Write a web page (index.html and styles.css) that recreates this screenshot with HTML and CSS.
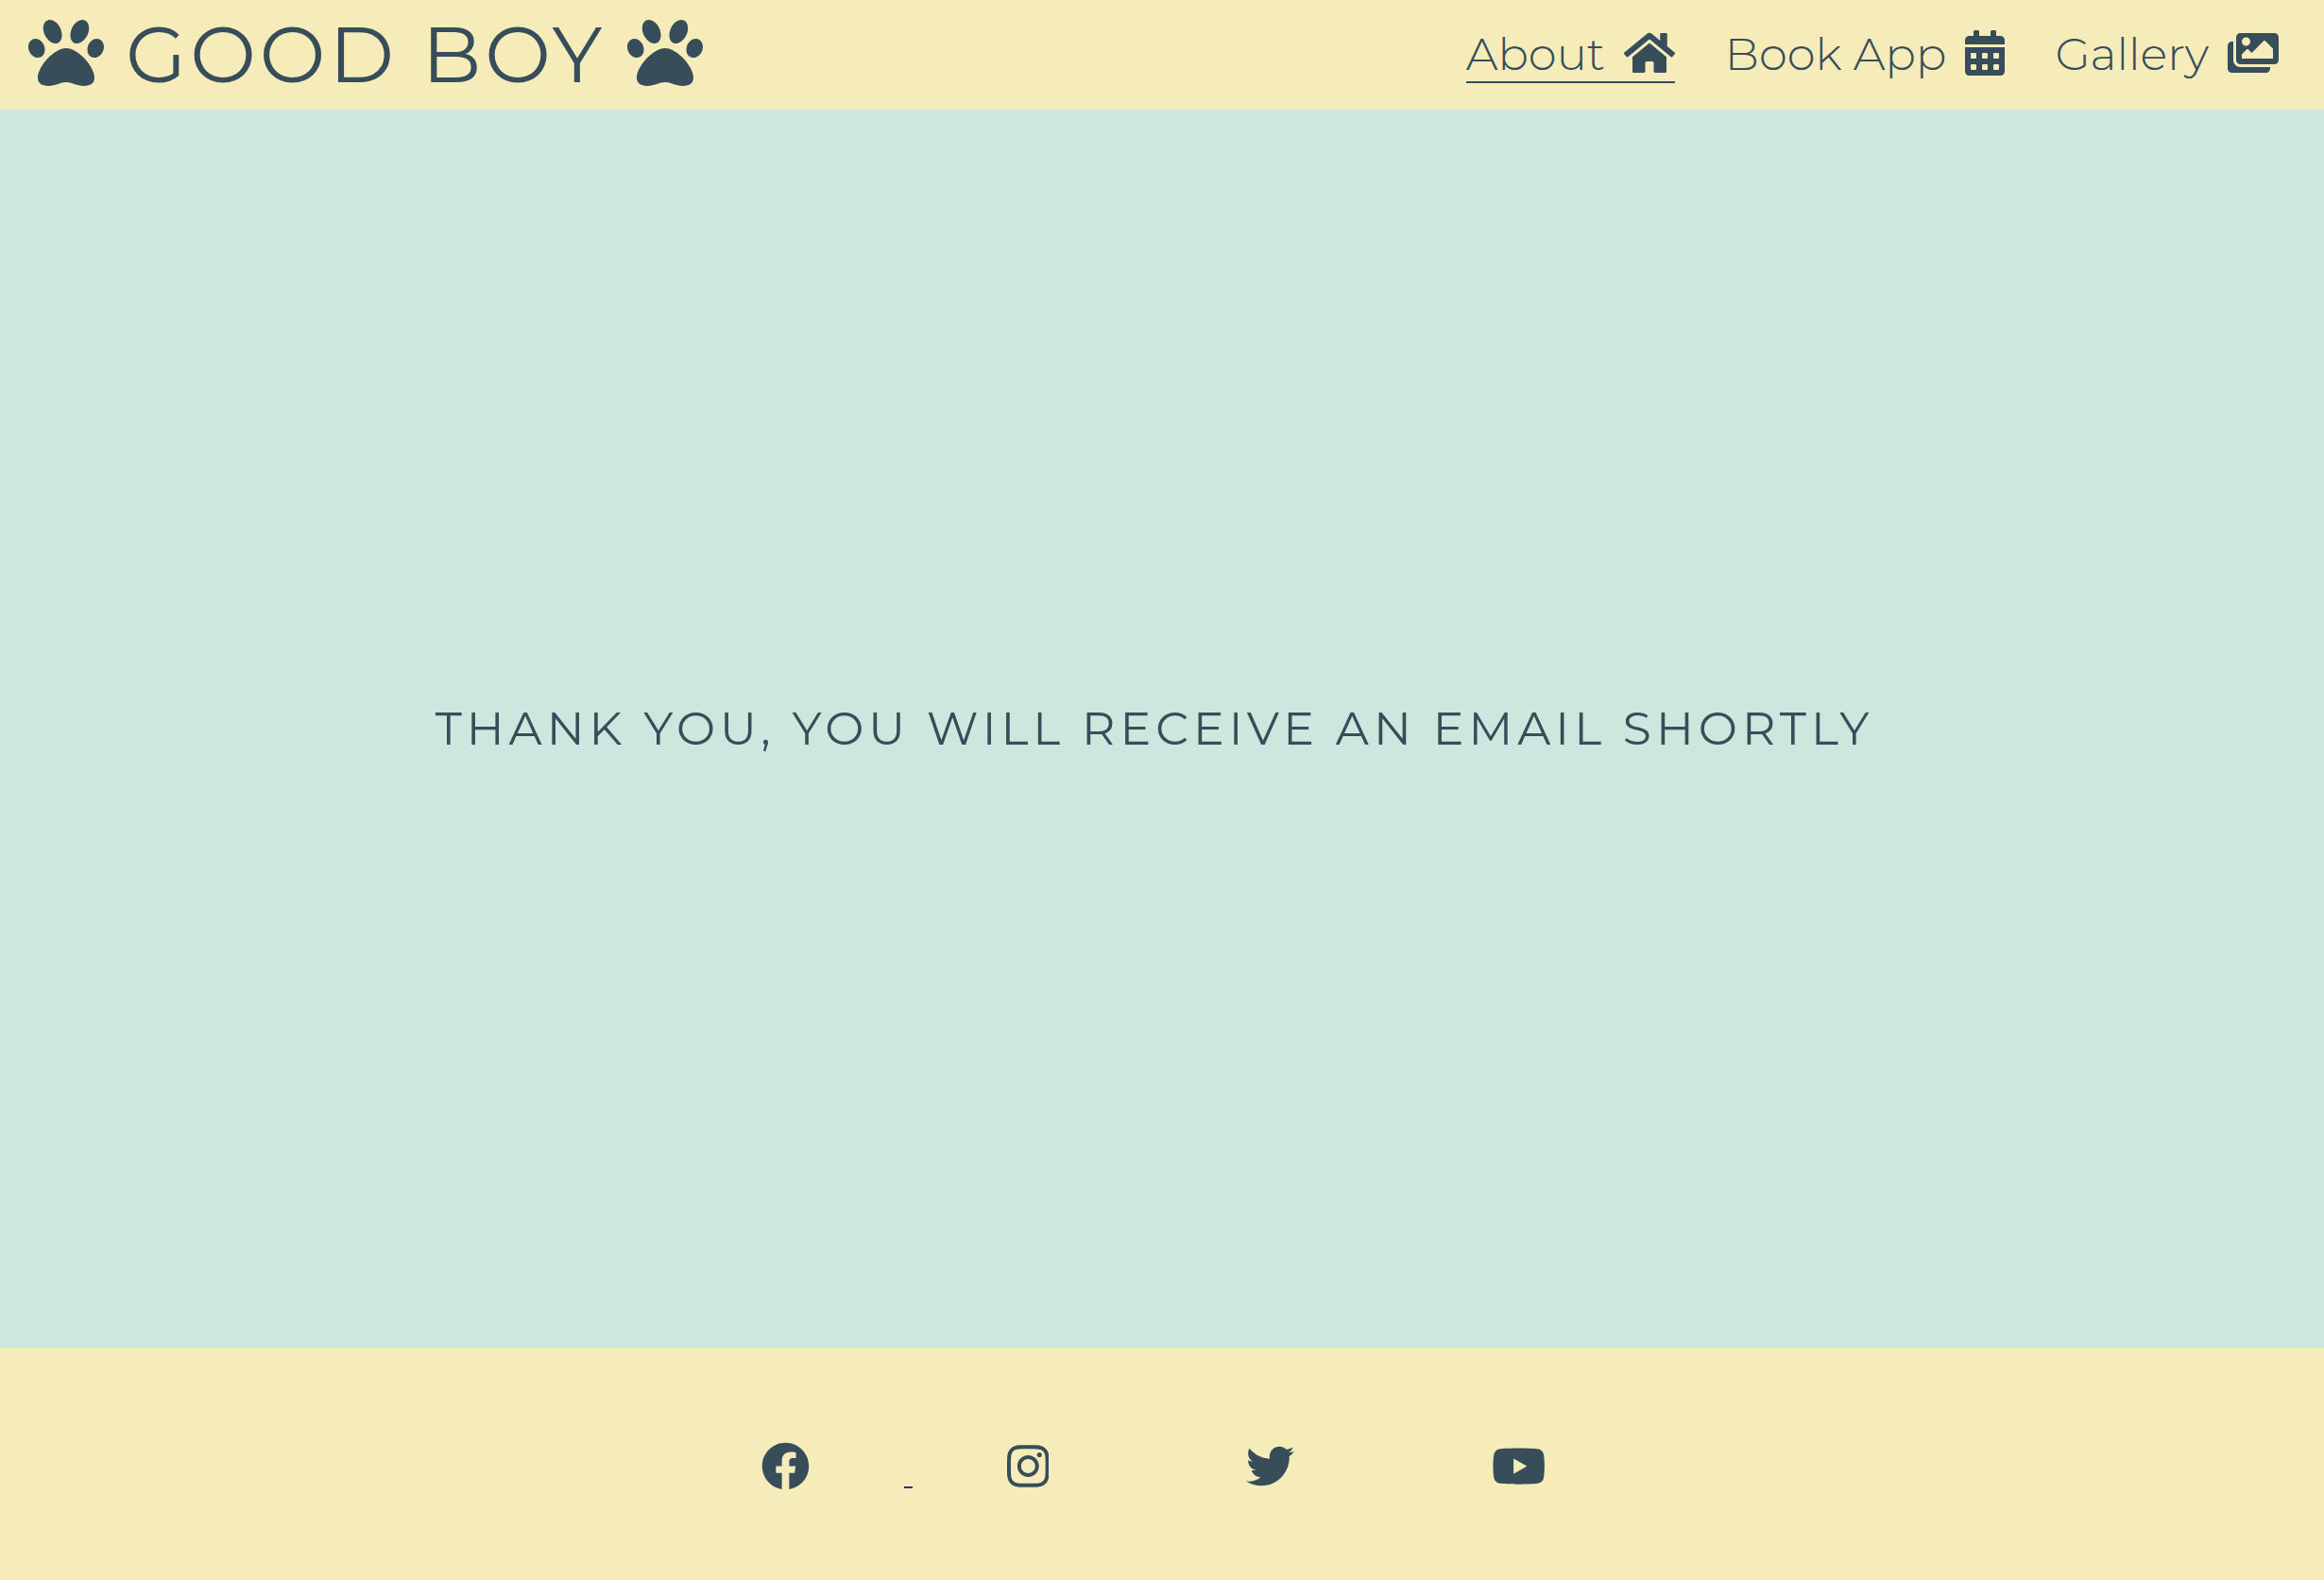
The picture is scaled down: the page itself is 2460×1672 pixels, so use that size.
FILE: index.html
```html
<!DOCTYPE html>
<html lang="en">
<head>
<meta charset="utf-8">
<meta name="viewport" content="width=device-width, initial-scale=1">
<title>Good Boy</title>
<link rel="stylesheet" href="styles.css">
</head>
<body>
<svg class="sprite" aria-hidden="true">
  <symbol id="paw" viewBox="0 0 512 512"><path d="M256 224c-79.41 0-192 122.76-192 200.25 0 34.9 26.81 55.75 71.74 55.75 48.84 0 81.09-25.08 120.26-25.08 39.51 0 71.85 25.08 120.26 25.08 44.93 0 71.74-20.85 71.74-55.75C448 346.76 335.41 224 256 224zm-147.28-12.61c-10.4-34.65-42.44-57.09-71.56-50.13-29.12 6.96-44.29 40.69-33.89 75.34 10.4 34.65 42.44 57.09 71.56 50.13 29.12-6.96 44.29-40.69 33.89-75.34zm84.72-20.78c30.94-8.14 42.94-49.88 26.81-93.25-16.13-43.37-54.28-71.93-85.22-63.79s-42.94 49.9-26.81 93.27 54.28 71.91 85.22 63.77zm281.39-29.34c-29.12-6.96-61.15 15.48-71.56 50.13-10.4 34.65 4.77 68.38 33.89 75.34 29.12 6.96 61.15-15.48 71.56-50.13 10.4-34.65-4.77-68.38-33.89-75.34zm-156.27 29.34c30.94 8.14 69.09-20.42 85.22-63.79 16.13-43.37 4.13-85.11-26.81-93.25s-69.08 20.42-85.21 63.79c-16.13 43.37-4.14 85.11 26.8 93.25z"/></symbol>
</svg>
<header class="header">
  <h1 class="brand">
    <svg class="paw" aria-hidden="true"><use href="#paw"/></svg>
    <span class="brand-name">GOOD BOY</span>
    <svg class="paw" aria-hidden="true"><use href="#paw"/></svg>
  </h1>
  <nav class="nav">
    <a class="nav-link active" href="#about">About
      <svg class="nav-icon" viewBox="0 0 576 512" aria-hidden="true"><path d="M280.37 148.26L96 300.11V464a16 16 0 0 0 16 16l112.06-.29a16 16 0 0 0 15.92-16V368a16 16 0 0 1 16-16h64a16 16 0 0 1 16 16v95.64a16 16 0 0 0 16 16.05L464 480a16 16 0 0 0 16-16V300L295.67 148.26a12.19 12.19 0 0 0-15.3 0zM571.6 251.47L488 182.56V44.05a12 12 0 0 0-12-12h-56a12 12 0 0 0-12 12v72.61L318.47 43a48 48 0 0 0-61 0L4.34 251.47a12 12 0 0 0-1.6 16.9l25.5 31A12 12 0 0 0 45.15 301l235.22-193.74a12.19 12.19 0 0 1 15.3 0L530.9 301a12 12 0 0 0 16.9-1.6l25.5-31a12 12 0 0 0-1.7-16.93z"/></svg>
    </a>
    <a class="nav-link" href="#book">Book App
      <svg class="nav-icon" viewBox="0 0 448 512" aria-hidden="true"><path fill-rule="evenodd" d="M0 464c0 26.5 21.5 48 48 48h352c26.5 0 48-21.5 48-48V192H0zM76 256h40a12 12 0 0 1 12 12v40a12 12 0 0 1-12 12H76a12 12 0 0 1-12-12v-40a12 12 0 0 1 12-12zM204 256h40a12 12 0 0 1 12 12v40a12 12 0 0 1-12 12h-40a12 12 0 0 1-12-12v-40a12 12 0 0 1 12-12zM332 256h40a12 12 0 0 1 12 12v40a12 12 0 0 1-12 12h-40a12 12 0 0 1-12-12v-40a12 12 0 0 1 12-12zM76 384h40a12 12 0 0 1 12 12v40a12 12 0 0 1-12 12H76a12 12 0 0 1-12-12v-40a12 12 0 0 1 12-12zM204 384h40a12 12 0 0 1 12 12v40a12 12 0 0 1-12 12h-40a12 12 0 0 1-12-12v-40a12 12 0 0 1 12-12zM332 384h40a12 12 0 0 1 12 12v40a12 12 0 0 1-12 12h-40a12 12 0 0 1-12-12v-40a12 12 0 0 1 12-12zM400 64h-48V16c0-8.8-7.2-16-16-16h-32c-8.8 0-16 7.2-16 16v48H160V16c0-8.8-7.2-16-16-16h-32c-8.8 0-16 7.2-16 16v48H48C21.5 64 0 85.5 0 112v48h448v-48c0-26.5-21.5-48-48-48z"/></svg>
    </a>
    <a class="nav-link" href="#gallery">Gallery
      <svg class="nav-icon" viewBox="0 0 576 512" aria-hidden="true"><path d="M480 416v16c0 26.51-21.49 48-48 48H48c-26.51 0-48-21.49-48-48V176c0-26.51 21.49-48 48-48h16v208c0 44.112 35.888 80 80 80h336zm96-80V80c0-26.51-21.49-48-48-48H144c-26.51 0-48 21.49-48 48v256c0 26.51 21.49 48 48 48h384c26.51 0 48-21.49 48-48zM256 128c0 26.51-21.49 48-48 48s-48-21.49-48-48 21.49-48 48-48 48 21.49 48 48zm-96 144l55.515-55.515c4.686-4.686 12.284-4.686 16.971 0L272 256l135.515-135.515c4.686-4.686 12.284-4.686 16.971 0L512 208v112H160v-48z"/></svg>
    </a>
  </nav>
</header>
<main class="main">
  <h2 class="message">THANK YOU, YOU WILL RECEIVE AN EMAIL SHORTLY</h2>
</main>
<footer class="footer">
  <a class="social" href="#facebook" aria-label="Facebook"><svg class="social-icon" viewBox="0 0 512 512" aria-hidden="true"><path d="M504 256C504 119 393 8 256 8S8 119 8 256c0 123.78 90.69 226.38 209.25 245V327.69h-63V256h63v-54.64c0-62.15 37-96.48 93.67-96.48 27.14 0 55.52 4.84 55.52 4.84v61h-31.28c-30.8 0-40.41 19.12-40.41 38.73V256h68.78l-11 71.69h-57.78V501C413.31 482.38 504 379.78 504 256z"/></svg></a>
  <span class="dash"></span>
  <a class="social" href="#instagram" aria-label="Instagram"><svg class="social-icon" viewBox="0 0 448 512" aria-hidden="true"><path d="M224.1 141c-63.6 0-114.9 51.3-114.9 114.9s51.3 114.9 114.9 114.9S339 319.5 339 255.9 287.7 141 224.1 141zm0 189.6c-41.1 0-74.7-33.5-74.7-74.7s33.5-74.7 74.7-74.7 74.7 33.5 74.7 74.7-33.6 74.7-74.7 74.7zm146.4-194.3c0 14.9-12 26.8-26.8 26.8-14.9 0-26.8-12-26.8-26.8s12-26.8 26.8-26.8 26.8 12 26.8 26.8zm76.1 27.2c-1.7-35.9-9.9-67.7-36.2-93.9-26.2-26.2-58-34.4-93.9-36.2-37-2.1-147.9-2.1-184.9 0-35.8 1.7-67.6 9.9-93.9 36.1s-34.4 58-36.2 93.9c-2.1 37-2.1 147.9 0 184.9 1.7 35.9 9.9 67.7 36.2 93.9s58 34.4 93.9 36.2c37 2.1 147.9 2.1 184.9 0 35.9-1.7 67.7-9.9 93.9-36.2 26.2-26.2 34.4-58 36.2-93.9 2.1-37 2.1-147.8 0-184.8zM398.8 388c-7.8 19.6-22.9 34.7-42.6 42.6-29.5 11.7-99.5 9-132.1 9s-102.7 2.6-132.1-9c-19.6-7.8-34.7-22.9-42.6-42.6-11.7-29.5-9-99.5-9-132.1s-2.6-102.7 9-132.1c7.8-19.6 22.9-34.7 42.6-42.6 29.5-11.7 99.5-9 132.1-9s102.7-2.6 132.1 9c19.6 7.8 34.7 22.9 42.6 42.6 11.7 29.5 9 99.5 9 132.1s2.7 102.7-9 132.1z"/></svg></a>
  <a class="social spaced" href="#twitter" aria-label="Twitter"><svg class="social-icon" viewBox="0 0 512 512" aria-hidden="true"><path d="M459.37 151.716c.325 4.548.325 9.097.325 13.645 0 138.72-105.583 298.558-298.558 298.558-59.452 0-114.68-17.219-161.137-47.106 8.447.974 16.568 1.299 25.34 1.299 49.055 0 94.213-16.568 130.274-44.832-46.132-.975-84.792-31.188-98.112-72.772 6.498.974 12.995 1.624 19.818 1.624 9.421 0 18.843-1.3 27.614-3.573-48.081-9.747-84.143-51.98-84.143-102.985v-1.299c13.969 7.797 30.214 12.67 47.431 13.319-28.264-18.843-46.781-51.005-46.781-87.391 0-19.492 5.197-37.36 14.294-52.954 51.655 63.675 129.3 105.258 216.365 109.807-1.624-7.797-2.599-15.918-2.599-24.04 0-57.828 46.782-104.934 104.934-104.934 30.213 0 57.502 12.67 76.67 33.137 23.715-4.548 46.456-13.32 66.599-25.34-7.798 24.366-24.366 44.833-46.132 57.827 21.117-2.273 41.584-8.122 60.426-16.243-14.292 20.791-32.161 39.308-52.628 54.253z"/></svg></a>
  <a class="social spaced" href="#youtube" aria-label="YouTube"><svg class="social-icon" viewBox="0 0 576 512" aria-hidden="true"><path d="M549.655 124.083c-6.281-23.65-24.787-42.276-48.284-48.597C458.781 64 288 64 288 64S117.22 64 74.629 75.486c-23.497 6.322-42.003 24.947-48.284 48.597-11.412 42.867-11.412 132.305-11.412 132.305s0 89.438 11.412 132.305c6.281 23.65 24.787 41.5 48.284 47.821C117.22 448 288 448 288 448s170.78 0 213.371-11.486c23.497-6.321 42.003-24.171 48.284-47.821 11.412-42.867 11.412-132.305 11.412-132.305s0-89.438-11.412-132.305zm-317.51 213.508V175.185l142.739 81.205-142.739 81.201z"/></svg></a>
</footer>
</body>
</html>
```
FILE: styles.css
```css
* {
  box-sizing: border-box;
  margin: 0;
}

body {
  display: flex;
  flex-direction: column;
  min-height: 100vh;
  background: #cce7de;
  color: #374e5a;
  font-family: Montserrat, Inter, "Liberation Sans", sans-serif;
  font-weight: 300;
}

svg {
  display: block;
  fill: currentColor;
}

.sprite {
  display: none;
}

.header {
  display: flex;
  justify-content: space-between;
  align-items: center;
  padding: 8px 48px 8px 30px;
  background: #f6ecba;
}

.brand {
  display: flex;
  align-items: center;
  gap: 23px;
  font-size: 83px;
  font-weight: 400;
  line-height: 100px;
  letter-spacing: 4px;
}

.paw {
  width: 80px;
  height: 80px;
  margin-bottom: 4px;
}

.nav {
  display: flex;
  gap: 53px;
}

.nav-link {
  display: flex;
  align-items: center;
  gap: 20px;
  border-bottom: 2px solid transparent;
  color: inherit;
  font-size: 48px;
  line-height: 58px;
  text-decoration: none;
}

.nav-link.active {
  border-color: currentColor;
}

.nav-icon {
  height: 48px;
  margin-bottom: 2px;
}

.main {
  display: flex;
  flex: 1;
  justify-content: center;
  align-items: center;
  padding-right: 16px;
}

.message {
  font-size: 49px;
  font-weight: 400;
  line-height: 60px;
  letter-spacing: 5px;
}

.footer {
  display: flex;
  justify-content: center;
  align-items: center;
  padding: 100px 18px 95px 0;
  background: #f6ecba;
}

.social {
  padding: 0 100px;
  color: inherit;
}

.social.spaced {
  margin-left: 9px;
}

.social-icon {
  height: 51px;
}

.dash {
  align-self: flex-end;
  width: 9px;
  margin-bottom: 2px;
  border-bottom: 2px solid #551a8b;
}
```
